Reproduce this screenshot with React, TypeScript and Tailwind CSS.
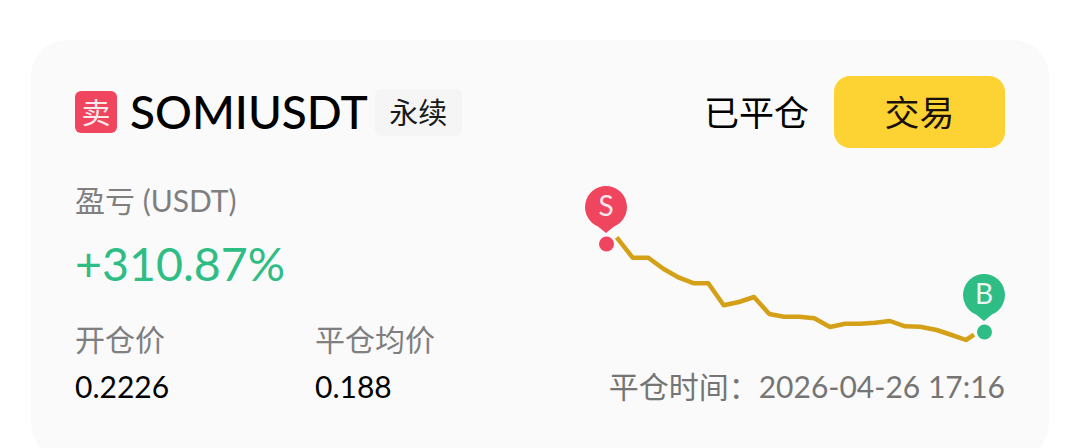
const fontStack = "font-['Lato','Noto_Sans_CJK_SC',sans-serif]";

const linePoints =
  '616.7,237.3 632.7,257.7 648.3,257.7 663.3,268.7 679,277.7 694,283.3 708.3,283.3 723.7,305.3 739,302 754,297 769.3,314 784,316.7 799.3,316.7 814.3,318.3 830,327 845,323.7 860,323.7 875,322.7 890,321 905,326.3 920,326.7 936.7,330 951.7,335 966,340 974,334.7';

function PriceChart() {
  return (
    <svg className="w-[430px] h-[180px]" viewBox="575 180 430 180" fill="none">
      <polyline points={linePoints} stroke="#d4a017" strokeWidth="4.5" strokeLinejoin="round" />
      <path d="M606 186a21 21 0 0 1 8 40.4l-8 6.6-8-6.6a21 21 0 0 1 8-40.4z" fill="#f0455f" />
      <circle cx="606.5" cy="244" r="7.5" fill="#f0455f" />
      <text x="606" y="216" textAnchor="middle" fontSize="28" fill="#fde8ec" fontFamily="Lato, sans-serif">S</text>
      <path d="M984 274a21 21 0 0 1 8 40.4l-8 6.6-8-6.6a21 21 0 0 1 8-40.4z" fill="#2ebd85" />
      <circle cx="984.5" cy="332" r="7.5" fill="#2ebd85" />
      <text x="984" y="304" textAnchor="middle" fontSize="28" fill="#e6f8f1" fontFamily="Lato, sans-serif">B</text>
    </svg>
  );
}

export default function App() {
  return (
    <div className={`h-[448px] w-[1080px] overflow-hidden bg-white pt-10 px-[31px] ${fontStack}`}>
      <div className="h-[420px] rounded-[36px] bg-[#fafafa] px-[44px] pt-9">
        <div className="flex items-center justify-between h-[72px]">
          <div className="flex items-center">
            <span className="flex h-[42px] w-[42px] items-center justify-center rounded-md bg-[#f0455f] text-[29px] leading-none text-[#fde8ec]">卖</span>
            <span className="ml-[13px] text-[46px] leading-none font-medium text-black">SOMIUSDT</span>
            <span className="ml-[7px] flex h-[47px] w-[87px] items-center justify-center rounded-md bg-[#f5f5f5] text-[29px] leading-none text-[#1a1a1a]">永续</span>
          </div>
          <div className="flex items-center gap-[25px]">
            <span className="text-[35px] leading-none text-black">已平仓</span>
            <button className="flex h-[72px] w-[171px] items-center justify-center rounded-2xl bg-[#fdd333] text-[35px] leading-none text-[#1a1206]">交易</button>
          </div>
        </div>
        <div className="flex justify-between">
          <div>
            <div className="mt-[34px] text-[30px] leading-[36px] text-[#7f7f7f]">盈亏 (USDT)</div>
            <div className="mt-[17px] text-[46.5px] leading-[56px] text-[#2ebd85]">+310.87%</div>
            <div className="mt-[30px] flex">
              <div className="w-[240px]">
                <div className="text-[30px] leading-[36px] text-[#7f7f7f]">开仓价</div>
                <div className="mt-[11px] text-[30px] leading-[36px] text-black">0.2226</div>
              </div>
              <div>
                <div className="text-[30px] leading-[36px] text-[#7f7f7f]">平仓均价</div>
                <div className="mt-[11px] text-[30px] leading-[36px] text-black">0.188</div>
              </div>
            </div>
          </div>
          <div className="flex flex-col items-end">
            <div className="mt-8">
              <PriceChart />
            </div>
            <div className="mt-[8px] text-[30px] leading-[36px] text-[#757575]">平仓时间：2026-04-26 17:16</div>
          </div>
        </div>
      </div>
    </div>
  );
}
